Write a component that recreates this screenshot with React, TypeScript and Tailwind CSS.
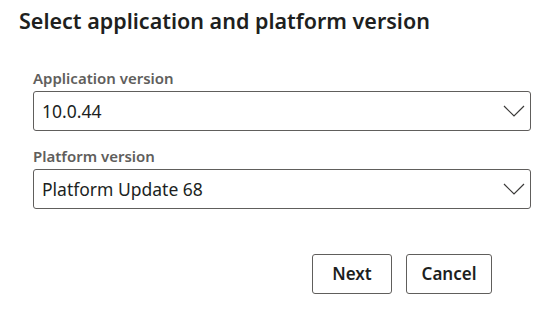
import React from "react";

function Chevron() {
  return (
    <svg width="22" height="12" viewBox="0 0 22 12" fill="none" className="shrink-0">
      <path d="M1 1 L11 11 L21 1" stroke="#3b3a39" strokeWidth="1.2" />
    </svg>
  );
}

function Field({ label, value }: { label: string; value: string }) {
  return (
    <div className="flex flex-col">
      <div className="text-[15px] leading-[20px] font-semibold text-[#605e5c] mb-[3px]">{label}</div>
      <div className="h-[40px] border border-[#605e5c] rounded-[3px] flex items-center justify-between pl-[8px] pr-[5px]">
        <span className="text-[17.5px] text-[#201f1e]">{value}</span>
        <Chevron />
      </div>
    </div>
  );
}

export default function App() {
  return (
    <div
      className="w-[547px] h-[324px] bg-white flex flex-col"
      style={{ fontFamily: '"Segoe UI", "Noto Sans", sans-serif' }}
    >
      <h1 className="pl-[19px] pt-[6px] text-[21.5px] leading-[30px] font-semibold text-[#201f1e]">
        Select application and platform version
      </h1>
      <div className="pl-[33px] pr-[16px] pt-[32px] flex flex-col gap-[15px]">
        <Field label="Application version" value="10.0.44" />
        <Field label="Platform version" value="Platform Update 68" />
      </div>
      <div className="flex gap-[14px] pl-[312px] pt-[45px]">
        <button className="w-[80px] h-[40px] border border-[#605e5c] rounded-[3px] text-[17px] font-semibold text-[#201f1e] bg-white">
          Next
        </button>
        <button className="w-[86px] h-[40px] border border-[#605e5c] rounded-[3px] text-[17px] font-semibold text-[#201f1e] bg-white">
          Cancel
        </button>
      </div>
    </div>
  );
}
